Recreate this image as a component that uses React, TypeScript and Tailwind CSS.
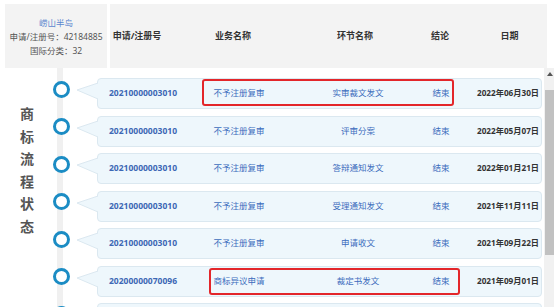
import React from "react";

type Step = {
  regNo: string;
  business: string;
  stage: string;
  result: string;
  date: string;
  flagged?: "a" | "b";
};

const steps: Step[] = [
  { regNo: "20210000003010", business: "不予注册复审", stage: "实审裁文发文", result: "结束", date: "2022年06月30日", flagged: "a" },
  { regNo: "20210000003010", business: "不予注册复审", stage: "评审分案", result: "结束", date: "2022年05月07日" },
  { regNo: "20210000003010", business: "不予注册复审", stage: "答辩通知发文", result: "结束", date: "2022年01月21日" },
  { regNo: "20210000003010", business: "不予注册复审", stage: "受理通知发文", result: "结束", date: "2021年11月11日" },
  { regNo: "20210000003010", business: "不予注册复审", stage: "申请收文", result: "结束", date: "2021年09月22日" },
  { regNo: "20200000070096", business: "商标异议申请", stage: "裁定书发文", result: "结束", date: "2021年09月01日", flagged: "b" },
];

function Marker() {
  return (
    <>
      <div className="flex w-[30px] shrink-0 justify-center pt-[2.5px]">
        <div className="h-[17px] w-[17px] rounded-full border-[3px] border-[#1b8cc4] bg-white" />
      </div>
      <svg width="22" height="31" viewBox="0 0 22 31" className="relative z-10 -mr-px shrink-0">
        <polygon points="1,12 22,5 22,21" fill="#eef7fc" />
        <polyline points="22,5 1,12 22,21" fill="none" stroke="#dbe8f0" strokeWidth="1" />
      </svg>
    </>
  );
}

function StepRow({ step }: { step: Step }) {
  return (
    <div className="flex h-[37.5px] shrink-0 items-start">
      <Marker />
      <div className="relative flex h-[31px] w-[445px] shrink-0 items-center rounded-[4px] border border-[#dbe8f0] bg-[#eef7fc] text-[8.5px]">
        <div className="w-[90px] shrink-0 text-center font-bold text-[#3d68b5]">{step.regNo}</div>
        <div className="w-[102px] shrink-0 text-center text-[#3c6cbd]">{step.business}</div>
        <div className="w-[136px] shrink-0 text-center text-[#3c6cbd]">{step.stage}</div>
        <div className="w-[30px] shrink-0 text-center text-[#3c6cbd]">{step.result}</div>
        <div className="shrink-0 whitespace-nowrap pl-[21px] text-[8.2px] font-bold text-[#333]">{step.date}</div>
        {step.flagged === "a" ? (
          <div className="absolute left-[104px] top-0 h-[27px] w-[252px] rounded-[3px] border-2 border-[#e3262a]" />
        ) : null}
        {step.flagged === "b" ? (
          <div className="absolute left-[111px] top-[1px] h-[27px] w-[251px] rounded-[3px] border-2 border-[#e3262a]" />
        ) : null}
      </div>
    </div>
  );
}

export default function App() {
  return (
    <div className="flex h-[307px] w-[554px] flex-col overflow-hidden bg-white font-['Noto_Sans','Noto_Sans_CJK_SC',sans-serif]">
      <div className="flex h-[68px] shrink-0 pt-[4px]">
        <div className="ml-[5px] flex w-[102px] flex-col items-center justify-center gap-[3px] bg-[#f3f3f3] text-[8.5px] leading-[11px] text-[#555]">
          <p className="text-[#5b86cf]">崂山半岛</p>
          <p className="whitespace-nowrap">申请/注册号：42184885</p>
          <p>国际分类：32</p>
        </div>
        <div className="ml-[3px] mr-[7px] flex flex-1 items-center bg-[#f3f3f3] text-[9px] font-bold text-[#333]">
          <div className="w-[54px] shrink-0 whitespace-nowrap text-center">申请/注册号</div>
          <div className="w-[138px] shrink-0 text-center">业务名称</div>
          <div className="w-[106px] shrink-0 text-center">环节名称</div>
          <div className="w-[64px] shrink-0 text-center">结论</div>
          <div className="flex-1 text-center">日期</div>
        </div>
      </div>

      <div className="flex min-h-0 flex-1 bg-[linear-gradient(to_right,transparent_57px,#f0f0f0_57px,#f0f0f0_63px,transparent_63px)]">
        <div className="w-[46px] shrink-0 pt-[35px] pl-[10px]">
          <div className="flex w-[34px] flex-col items-center text-[14px] font-bold leading-[22.5px] text-[#555]">
            <span>商</span>
            <span>标</span>
            <span>流</span>
            <span>程</span>
            <span>状</span>
            <span>态</span>
          </div>
        </div>

        <div className="flex w-[497px] shrink-0 flex-col pt-[10px]">
          {steps.map((s, i) => (
            <StepRow key={i} step={s} />
          ))}
          {/* next row, only its top edge shows */}
          <div className="flex h-[37.5px] shrink-0 items-start">
            <Marker />
            <div className="h-[31px] w-[445px] shrink-0 rounded-[4px] border border-[#dbe8f0] bg-[#eef7fc]" />
          </div>
        </div>

        <div className="ml-px flex w-[11px] shrink-0 flex-col bg-[#f1f1f1]">
          <div className="flex h-[22px] items-start justify-center pt-[4px]">
            <div className="h-0 w-0 border-x-[3px] border-b-[4px] border-x-transparent border-b-[#555]" />
          </div>
          <div className="mx-[1px] h-[165px] bg-[#c1c1c1]" />
        </div>
      </div>
    </div>
  );
}
